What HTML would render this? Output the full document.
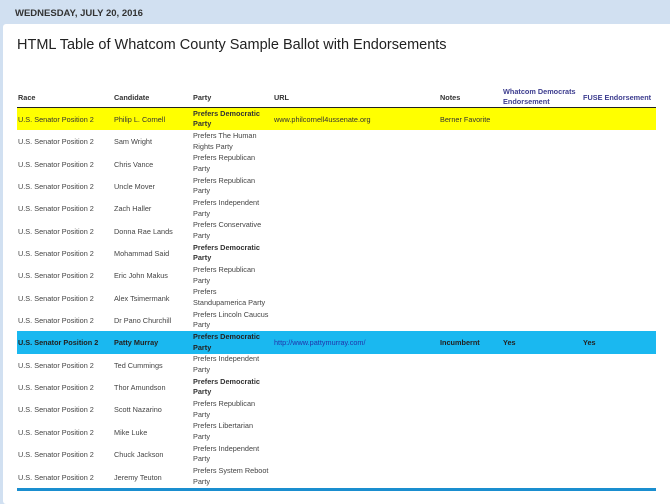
<!DOCTYPE html>
<html><head><meta charset="utf-8"><style>
*{margin:0;padding:0;box-sizing:border-box}
body{width:670px;height:491px;overflow:hidden;background:#d1e0f1;font-family:"Liberation Sans",Arial,sans-serif;position:relative}
.date{position:absolute;left:15px;top:8px;font-size:9.5px;font-weight:bold;color:#333}
.panel{position:absolute;left:3px;top:24px;width:680px;height:480px;background:#fff;border-radius:3px}
h1{position:absolute;left:17px;top:37px;font-size:14.5px;font-weight:normal;color:#222}
.hdr{position:absolute;left:17px;top:86px;width:639px;height:22px;border-bottom:1.5px solid #222;font-size:7.3px;font-weight:bold;color:#333}
.hdr span{position:absolute;top:7px}
.hdr .p{color:#3d3d8f}
.rows{position:absolute;left:17px;top:108px;width:639px}
.r{height:22.35px;position:relative;font-size:7.3px;color:#444}
.r span{position:absolute;top:7px;white-space:nowrap}
.r .pt{top:0;line-height:10.8px;padding-top:0.5px}
.y{background:#ffff00;color:#333}
.b{background:#1ab8f0;color:#222;font-weight:bold}
.b .u{color:#2233aa;font-weight:normal}
.bold{font-weight:bold;color:#333}
.line{position:absolute;left:17px;top:488px;width:639px;height:3px;background:#1a8ecf}
</style></head><body>
<div class="date">WEDNESDAY, JULY 20, 2016</div>
<div class="panel"></div>
<h1>HTML Table of Whatcom County Sample Ballot with Endorsements</h1>
<div class="hdr">
<span style="left:1px">Race</span><span style="left:97px">Candidate</span><span style="left:176px">Party</span><span style="left:257px">URL</span><span style="left:423px">Notes</span>
<span class="p" style="left:486px;top:1px;line-height:10px">Whatcom Democrats<br>Endorsement</span><span class="p" style="left:566px">FUSE Endorsement</span>
</div>
<div class="rows">
<div class="r y"><span style="left:1px">U.S. Senator Position 2</span><span style="left:97px">Philip L. Cornell</span><span class="pt bold" style="left:176px">Prefers Democratic<br>Party</span><span style="left:257px">www.philcornell4ussenate.org</span><span style="left:423px">Berner Favorite</span></div>
<div class="r"><span style="left:1px">U.S. Senator Position 2</span><span style="left:97px">Sam Wright</span><span class="pt" style="left:176px">Prefers The Human<br>Rights Party</span></div>
<div class="r"><span style="left:1px">U.S. Senator Position 2</span><span style="left:97px">Chris Vance</span><span class="pt" style="left:176px">Prefers Republican<br>Party</span></div>
<div class="r"><span style="left:1px">U.S. Senator Position 2</span><span style="left:97px">Uncle Mover</span><span class="pt" style="left:176px">Prefers Republican<br>Party</span></div>
<div class="r"><span style="left:1px">U.S. Senator Position 2</span><span style="left:97px">Zach Haller</span><span class="pt" style="left:176px">Prefers Independent<br>Party</span></div>
<div class="r"><span style="left:1px">U.S. Senator Position 2</span><span style="left:97px">Donna Rae Lands</span><span class="pt" style="left:176px">Prefers Conservative<br>Party</span></div>
<div class="r"><span style="left:1px">U.S. Senator Position 2</span><span style="left:97px">Mohammad Said</span><span class="pt bold" style="left:176px">Prefers Democratic<br>Party</span></div>
<div class="r"><span style="left:1px">U.S. Senator Position 2</span><span style="left:97px">Eric John Makus</span><span class="pt" style="left:176px">Prefers Republican<br>Party</span></div>
<div class="r"><span style="left:1px">U.S. Senator Position 2</span><span style="left:97px">Alex Tsimermank</span><span class="pt" style="left:176px">Prefers<br>Standupamerica Party</span></div>
<div class="r"><span style="left:1px">U.S. Senator Position 2</span><span style="left:97px">Dr Pano Churchill</span><span class="pt" style="left:176px">Prefers Lincoln Caucus<br>Party</span></div>
<div class="r b"><span style="left:1px">U.S. Senator Position 2</span><span style="left:97px">Patty Murray</span><span class="pt" style="left:176px">Prefers Democratic<br>Party</span><span class="u" style="left:257px">http://www.pattymurray.com/</span><span style="left:423px">Incumbernt</span><span style="left:486px">Yes</span><span style="left:566px">Yes</span></div>
<div class="r"><span style="left:1px">U.S. Senator Position 2</span><span style="left:97px">Ted Cummings</span><span class="pt" style="left:176px">Prefers Independent<br>Party</span></div>
<div class="r"><span style="left:1px">U.S. Senator Position 2</span><span style="left:97px">Thor Amundson</span><span class="pt bold" style="left:176px">Prefers Democratic<br>Party</span></div>
<div class="r"><span style="left:1px">U.S. Senator Position 2</span><span style="left:97px">Scott Nazarino</span><span class="pt" style="left:176px">Prefers Republican<br>Party</span></div>
<div class="r"><span style="left:1px">U.S. Senator Position 2</span><span style="left:97px">Mike Luke</span><span class="pt" style="left:176px">Prefers Libertarian<br>Party</span></div>
<div class="r"><span style="left:1px">U.S. Senator Position 2</span><span style="left:97px">Chuck Jackson</span><span class="pt" style="left:176px">Prefers Independent<br>Party</span></div>
<div class="r"><span style="left:1px">U.S. Senator Position 2</span><span style="left:97px">Jeremy Teuton</span><span class="pt" style="left:176px">Prefers System Reboot<br>Party</span></div>
</div>
<div class="line"></div>
</body></html>
